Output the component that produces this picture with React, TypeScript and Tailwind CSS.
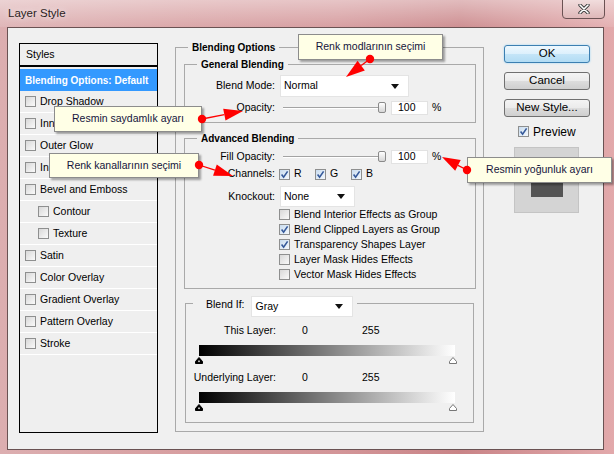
import React from 'react'

// Layer Style dialog (Photoshop) with Turkish callouts on top

function Check({ checked }: { checked?: boolean }) {
  return (
    <span
      className={
        'inline-flex h-[11px] w-[11px] shrink-0 items-center justify-center border border-[#8e8f8f] ' +
        (checked
          ? 'bg-[linear-gradient(135deg,#c9dcef,#f4f8fc)]'
          : 'bg-[linear-gradient(135deg,#d8d8d8,#fafafa)]')
      }
    >
      {checked && (
        <svg viewBox="0 0 9 9" className="h-[9px] w-[9px]">
          <path d="M1.6 4.6 L3.6 7.2 L7.6 1.4" fill="none" stroke="#35599a" strokeWidth="1.6" />
        </svg>
      )}
    </span>
  )
}

function Caret() {
  return (
    <svg viewBox="0 0 8 5" className="h-[5px] w-[8px]">
      <path d="M0 0 L8 0 L4 5 Z" fill="#111" />
    </svg>
  )
}

function Slider() {
  return (
    <div className="relative ml-[8px] h-[14px] w-[103px]">
      <div className="absolute left-0 right-[2px] top-[6px] h-[2px] border-t border-b border-t-[#a3a3a3] border-b-white" />
      <div className="absolute right-0 top-[1px] h-[11px] w-[8px] rounded-[2px] border border-[#8a8a8a] bg-gradient-to-b from-white to-[#d6d6d6]" />
    </div>
  )
}

function NumBox({ value }: { value: string }) {
  return (
    <div className="ml-[5px] flex h-[14px] w-[37px] items-center border border-[#e2e2e2] bg-white pl-[6px]">
      {value}
    </div>
  )
}

function Marker({ light }: { light?: boolean }) {
  return (
    <svg viewBox="0 0 8 7" className="h-[7px] w-[8px]">
      <path
        d="M4 0.5 L7.5 4.5 L7.5 6.5 L0.5 6.5 L0.5 4.5 Z"
        fill={light ? '#fff' : '#000'}
        stroke={light ? '#777' : '#000'}
        strokeWidth="1"
      />
      {!light && <rect x="3.3" y="3.5" width="1.4" height="1.6" fill="#fff" />}
    </svg>
  )
}

const styles: { name: string; indent?: boolean }[] = [
  { name: 'Drop Shadow' },
  { name: 'Inner Shadow' },
  { name: 'Outer Glow' },
  { name: 'Inner Glow' },
  { name: 'Bevel and Emboss' },
  { name: 'Contour', indent: true },
  { name: 'Texture', indent: true },
  { name: 'Satin' },
  { name: 'Color Overlay' },
  { name: 'Gradient Overlay' },
  { name: 'Pattern Overlay' },
  { name: 'Stroke' },
]

const advancedChecks = [
  { label: 'Blend Interior Effects as Group', checked: false },
  { label: 'Blend Clipped Layers as Group', checked: true },
  { label: 'Transparency Shapes Layer', checked: true },
  { label: 'Layer Mask Hides Effects', checked: false },
  { label: 'Vector Mask Hides Effects', checked: false },
]

const callouts = [
  { text: 'Renk modlarının seçimi', box: 'left-[298px] top-[34px] w-[145px] h-[26px]' },
  { text: 'Resmin saydamlık ayarı', box: 'left-[54px] top-[106px] w-[148px] h-[26px]' },
  { text: 'Renk kanallarının seçimi', box: 'left-[49px] top-[153px] w-[150px] h-[25px]' },
  { text: 'Resmin yoğunluk ayarı', box: 'left-[467px] top-[157px] w-[145px] h-[26px]' },
]

// dot -> arrow tip
const arrows = [
  { d: [370, 59], t: [346, 77], len: 19 },
  { d: [202, 119], t: [243, 111], len: 19 },
  { d: [199, 165], t: [233, 176], len: 19 },
  { d: [467, 170], t: [442, 157], len: 18 },
]

function headPoints(dx: number, dy: number, tx: number, ty: number, len: number, hw = 6) {
  const vx = tx - dx
  const vy = ty - dy
  const d = Math.hypot(vx, vy)
  const ux = vx / d
  const uy = vy / d
  const bx = tx - ux * len
  const by = ty - uy * len
  return {
    pts: `${tx},${ty} ${bx - uy * hw},${by + ux * hw} ${bx + uy * hw},${by - ux * hw}`,
    bx,
    by,
  }
}

const btn =
  'flex h-[18px] w-[86px] items-center justify-center rounded-[3px] border text-[11.5px] text-black'

export default function App() {
  return (
    <div className="relative h-[454px] w-[614px] overflow-hidden bg-[linear-gradient(90deg,#dcaeb0_0%,#d79ea0_30%,#d39598_55%,#c98487_75%,#e2a9ab_100%)] font-['Liberation_Sans',Arial,sans-serif]">
      {/* title bar */}
      <div className="relative flex h-[27px] items-center bg-[linear-gradient(180deg,rgba(255,255,255,0.45),rgba(255,255,255,0.1))] pl-[8px]">
        <span className="text-[11.5px] text-[#2a2222] [text-shadow:0_0_6px_rgba(255,255,255,0.9)]">Layer Style</span>
        <div className="absolute right-[9px] top-[-3px] flex h-[22px] w-[43px] items-center justify-center rounded-b-[4px] border border-[#6b5253] bg-[linear-gradient(180deg,#f3e1e1,#dfb8b9)] pt-[2px]">
          <svg viewBox="0 0 12 10" className="h-[10px] w-[12px]">
            <path d="M2 1 L10 9 M10 1 L2 9" stroke="#3d3d3d" strokeWidth="3.4" strokeLinecap="round" />
            <path d="M2 1 L10 9 M10 1 L2 9" stroke="#fff" strokeWidth="1.6" strokeLinecap="round" />
          </svg>
        </div>
      </div>

      {/* client area */}
      <div className="ml-[7px] h-[423px] w-[597px] border border-[#6a5253] bg-[#f0f0f0] text-[10.5px] text-black">
        <div className="flex items-start pl-[11px] pt-[15px]">
          {/* styles list */}
          <div className="h-[390px] w-[139px] border border-black bg-[#efefef]">
            <div className="flex h-[21px] items-center pl-[6px]">Styles</div>
            <div className="h-[2px] bg-black" />
            <div className="mt-[2px] flex h-[22px] items-center bg-[#3399ff] pl-[5px] text-[10px] font-bold text-white">
              Blending Options: Default
            </div>
            {styles.map((s) => (
              <div
                key={s.name}
                className={
                  'flex h-[22px] items-center gap-[4px] border-b border-white ' + (s.indent ? 'pl-[18px]' : 'pl-[5px]')
                }
              >
                <Check />
                <span>{s.name}</span>
              </div>
            ))}
          </div>

          {/* blending options */}
          <div className="ml-[17px] mt-[4px] h-[385px] w-[309px] border border-[#a9a9a9]">
            <div className="-mt-[8px] ml-[12px] h-[15px] w-fit bg-[#f0f0f0] px-[4px] text-[10px] leading-[15px] font-bold">
              Blending Options
            </div>

            {/* general blending */}
            <div className="ml-[8px] mt-[9px] h-[59px] w-[292px] border border-[#a9a9a9]">
              <div className="-mt-[8px] ml-[12px] h-[15px] w-fit bg-[#f0f0f0] px-[4px] text-[10px] leading-[15px] font-bold">
                General Blending
              </div>
              <div className="mt-[3px] flex h-[22px] items-center">
                <span className="w-[90px] text-right">Blend Mode:</span>
                <div className="ml-[5px] flex h-[22px] w-[129px] items-center justify-between border border-[#e4e4e4] bg-white pl-[3px] pr-[9px]">
                  <span>Normal</span>
                  <Caret />
                </div>
              </div>
              <div className="mt-[4px] flex h-[14px] items-center">
                <span className="w-[90px] text-right">Opacity:</span>
                <Slider />
                <NumBox value="100" />
                <span className="ml-[4px]">%</span>
              </div>
            </div>

            {/* advanced blending */}
            <div className="ml-[8px] mt-[15px] h-[151px] w-[292px] border border-[#a9a9a9]">
              <div className="-mt-[8px] ml-[12px] h-[15px] w-fit bg-[#f0f0f0] px-[4px] text-[10px] leading-[15px] font-bold">
                Advanced Blending
              </div>
              <div className="mt-[4px] flex h-[14px] items-center">
                <span className="w-[90px] text-right">Fill Opacity:</span>
                <Slider />
                <NumBox value="100" />
                <span className="ml-[4px]">%</span>
              </div>
              <div className="mt-[3px] flex h-[14px] items-center">
                <span className="w-[90px] text-right">Channels:</span>
                <div className="ml-[4px] flex items-center gap-[4px]">
                  <Check checked />
                  <span className="w-[17px]">R</span>
                  <Check checked />
                  <span className="w-[17px]">G</span>
                  <Check checked />
                  <span>B</span>
                </div>
              </div>
              <div className="mt-[5px] flex h-[21px] items-center">
                <span className="w-[90px] text-right">Knockout:</span>
                <div className="ml-[5px] flex h-[21px] w-[75px] items-center justify-between border border-[#e4e4e4] bg-white pl-[3px] pr-[9px]">
                  <span>None</span>
                  <Caret />
                </div>
              </div>
              <div className="flex flex-col pl-[94px]">
                {advancedChecks.map((c) => (
                  <div key={c.label} className="flex h-[15px] items-center gap-[4px]">
                    <Check checked={c.checked} />
                    <span>{c.label}</span>
                  </div>
                ))}
              </div>
            </div>

            {/* blend if */}
            <div className="ml-[9px] mt-[14px] h-[120px] w-[289px] border border-[#a9a9a9]">
              <div className="-mt-[8px] ml-[7px] flex h-[21px] w-fit items-center bg-[#f0f0f0] pl-[13px] pr-[4px]">
                <span className="-mt-[3px]">Blend If:</span>
                <div className="ml-[6px] flex h-[21px] w-[102px] items-center justify-between border border-[#e4e4e4] bg-white pl-[4px] pr-[9px]">
                  <span>Gray</span>
                  <Caret />
                </div>
              </div>
              {['This Layer:', 'Underlying Layer:'].map((label) => (
                <div key={label}>
                  <div className="mt-[7px] flex h-[14px] items-center">
                    <span className="w-[90px] text-right">{label}</span>
                    <span className="ml-[26px] w-[60px]">0</span>
                    <span>255</span>
                  </div>
                  <div className="ml-[13px] mt-[7px] h-[11px] w-[256px] bg-[linear-gradient(90deg,#000,#fff)]" />
                  <div className="ml-[9px] flex h-[8px] w-[262px] items-end justify-between">
                    <Marker />
                    <Marker light />
                  </div>
                </div>
              ))}
            </div>
          </div>

          {/* buttons */}
          <div className="ml-[20px] mt-[2px] flex flex-col">
            <button className={btn + ' border-[#3c7fb1] bg-[linear-gradient(180deg,#eef8fe_0%,#dcf0fc_50%,#c4e5f8_51%,#b2dcf4_100%)] shadow-[0_0_2px_#8fd0f5]'}>
              OK
            </button>
            <button className={btn + ' mt-[9px] border-[#707070] bg-[linear-gradient(180deg,#f4f4f4_0%,#ebebeb_50%,#dddddd_51%,#cfcfcf_100%)]'}>
              Cancel
            </button>
            <button className={btn + ' mt-[9px] border-[#707070] bg-[linear-gradient(180deg,#f4f4f4_0%,#ebebeb_50%,#dddddd_51%,#cfcfcf_100%)]'}>
              New Style...
            </button>
            <div className="ml-[14px] mt-[8px] flex h-[13px] items-center gap-[4px] text-[12px]">
              <Check checked />
              <span>Preview</span>
            </div>
            <div className="ml-[10px] mt-[9px] h-[66px] w-[65px] border border-[#c4c4c4] bg-[#d4d4d4] pl-[16px] pt-[27px]">
              <div className="h-[22px] w-[32px] bg-[#545454]" />
            </div>
          </div>
        </div>
      </div>

      {/* callouts */}
      {callouts.map((c) => (
        <div
          key={c.text}
          className={
            'absolute flex items-center justify-center border border-[#8c8c8c] bg-[#ffffe6] text-[10.5px] text-[#14143c] shadow-[2px_2px_2px_rgba(0,0,0,0.35)] ' +
            c.box
          }
        >
          {c.text}
        </div>
      ))}

      <svg className="pointer-events-none absolute left-0 top-0 h-[454px] w-[614px]" viewBox="0 0 614 454">
        {arrows.map((a, i) => {
          const h = headPoints(a.d[0], a.d[1], a.t[0], a.t[1], a.len)
          return (
            <g key={i}>
              <line x1={a.d[0]} y1={a.d[1]} x2={h.bx} y2={h.by} stroke="#ff0000" strokeWidth="1.3" />
              <polygon points={h.pts} fill="#ff0000" />
              <circle cx={a.d[0]} cy={a.d[1]} r="4.2" fill="#ff0000" />
            </g>
          )
        })}
      </svg>
    </div>
  )
}
